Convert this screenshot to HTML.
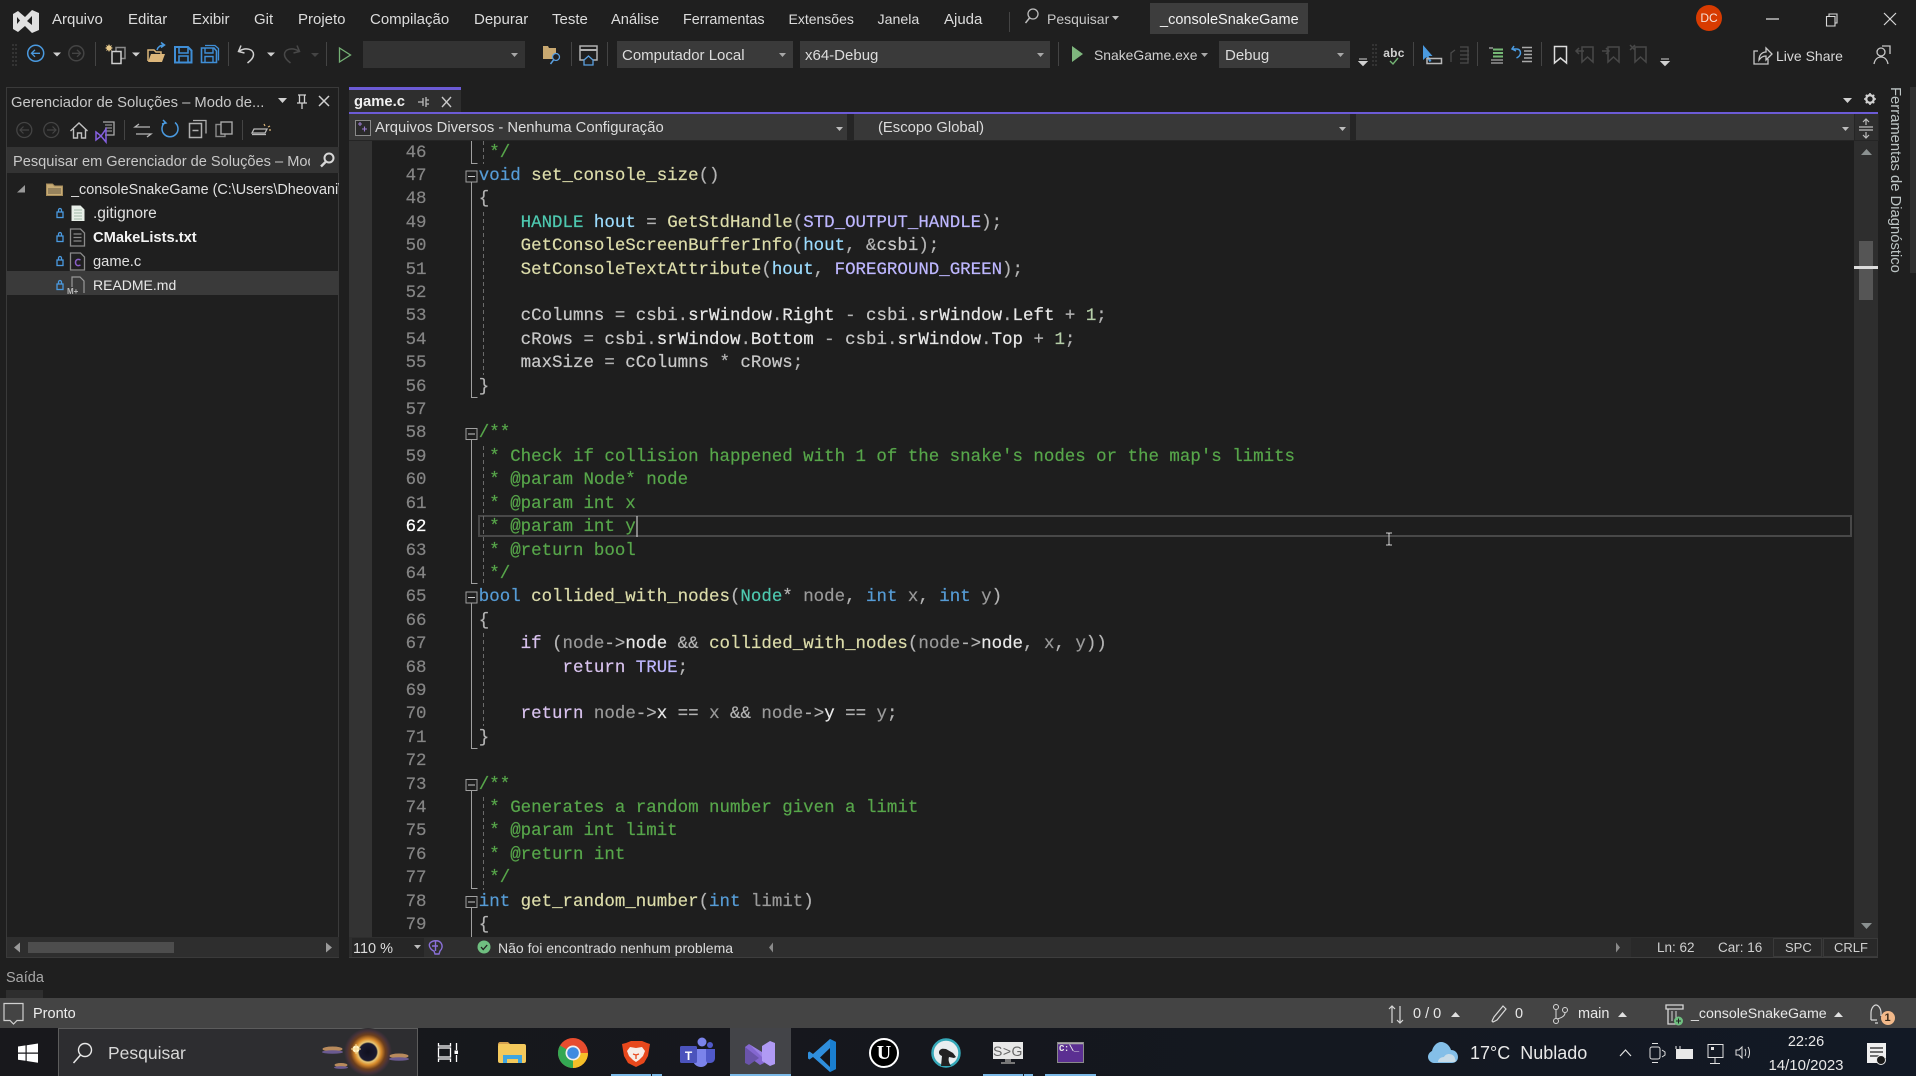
<!DOCTYPE html>
<html lang="pt-BR">
<head>
<meta charset="utf-8">
<title>game.c - _consoleSnakeGame</title>
<style>
html,body{margin:0;padding:0;width:1916px;height:1076px;overflow:hidden;background:#1f1f1f}
body{position:relative;font-family:"Liberation Sans",sans-serif;font-size:15px;color:#dcdcdc}
.t{position:absolute;white-space:nowrap;line-height:20px;height:20px}
.b{position:absolute}
pre{position:absolute;margin:0;font-family:"Liberation Mono",monospace;font-size:17.46px;line-height:23.4px;white-space:pre;-webkit-text-stroke:.2px}
#code{left:478.8px;top:141.6px;color:#c8c8c8;font-weight:400}
#nums{left:396px;top:141.6px;width:30.5px;text-align:right;color:#858585}
.k{color:#569cd6}.f{color:#dcdcaa}.y{color:#4ec9b0}.m{color:#beb7ff}.v{color:#9cdcfe}.p{color:#9a9a9a}.c{color:#57a64a}.e{color:#d8c2ee}.w{color:#e8e8e8}.o{color:#b4b4b4}
svg{position:absolute;left:0;top:0}
</style>
</head>
<body>
<!-- backgrounds -->
<div class="b" style="left:1150px;top:3px;width:158px;height:31px;background:#3d3d3d"></div>
<div class="b" style="left:363px;top:41px;width:162px;height:27px;background:#333"></div>
<div class="b" style="left:617px;top:41px;width:176px;height:27px;background:#3a3a3a"></div>
<div class="b" style="left:800px;top:41px;width:250px;height:27px;background:#3a3a3a"></div>
<div class="b" style="left:1219px;top:41px;width:131px;height:27px;background:#3a3a3a"></div>

<!-- solution explorer -->
<div class="b" style="left:6px;top:87px;width:333px;height:871px;border:1px solid #3a3a3a;box-sizing:border-box;background:#1f1f1f"></div>
<div class="b" style="left:7px;top:147px;width:332px;height:26px;background:#333"></div>
<div class="b" style="left:7px;top:271px;width:332px;height:24px;background:#3a3a3a"></div>
<div class="b" style="left:7px;top:937px;width:332px;height:20px;background:#2e2e2e"></div>
<div class="b" style="left:28px;top:942px;width:146px;height:11px;background:#4d4d4d"></div>

<!-- editor -->
<div class="b" style="left:349px;top:87px;width:112px;height:25px;background:#2e2e2e;border-top:3px solid #6c5bd6;box-sizing:border-box"></div>
<div class="b" style="left:349px;top:112px;width:1529px;height:2px;background:#6c5bd6"></div>
<div class="b" style="left:349px;top:114px;width:1530px;height:27px;background:#252525"></div>
<div class="b" style="left:349px;top:114px;width:498px;height:26px;background:#383838"></div>
<div class="b" style="left:854px;top:114px;width:496px;height:26px;background:#383838"></div>
<div class="b" style="left:1356px;top:114px;width:498px;height:26px;background:#383838"></div>
<div class="b" style="left:1855px;top:114px;width:23px;height:26px;background:#2e2e2e"></div>
<div class="b" style="left:349px;top:141px;width:23px;height:796px;background:#333"></div>
<div class="b" style="left:372px;top:141px;width:1482px;height:796px;background:#1e1e1e"></div>
<div class="b" style="left:1854px;top:141px;width:24px;height:796px;background:#2e2e2e"></div>
<div class="b" style="left:1859px;top:241px;width:14px;height:59px;background:#555"></div>
<div class="b" style="left:1854px;top:266px;width:24px;height:3px;background:#dcdcdc"></div>
<div class="b" style="left:478px;top:515px;width:1374px;height:22px;border:2px solid #484848;box-sizing:border-box"></div>
<div class="b" style="left:1910px;top:87px;width:6px;height:186px;background:#303030"></div>

<pre id="nums">46
47
48
49
50
51
52
53
54
55
56
57
58
59
60
61
<span style="color:#fff">62</span>
63
64
65
66
67
68
69
70
71
72
73
74
75
76
77
78
79</pre>
<pre id="code"><span class="c"> */</span>
<span class="k">void</span> <span class="f">set_console_size</span><span class="o">()</span>
<span class="o">{</span>
    <span class="y">HANDLE</span> <span class="v">hout</span> <span class="o">=</span> <span class="f">GetStdHandle</span><span class="o">(</span><span class="m">STD_OUTPUT_HANDLE</span><span class="o">);</span>
    <span class="f">GetConsoleScreenBufferInfo</span><span class="o">(</span><span class="v">hout</span><span class="o">, &amp;</span>csbi<span class="o">);</span>
    <span class="f">SetConsoleTextAttribute</span><span class="o">(</span><span class="v">hout</span><span class="o">,</span> <span class="m">FOREGROUND_GREEN</span><span class="o">);</span>

    cColumns <span class="o">=</span> csbi<span class="o">.</span><span class="w">srWindow</span><span class="o">.</span><span class="w">Right</span> <span class="o">-</span> csbi<span class="o">.</span><span class="w">srWindow</span><span class="o">.</span><span class="w">Left</span> <span class="o">+</span> <span style="color:#b5cea8">1</span><span class="o">;</span>
    cRows <span class="o">=</span> csbi<span class="o">.</span><span class="w">srWindow</span><span class="o">.</span><span class="w">Bottom</span> <span class="o">-</span> csbi<span class="o">.</span><span class="w">srWindow</span><span class="o">.</span><span class="w">Top</span> <span class="o">+</span> <span style="color:#b5cea8">1</span><span class="o">;</span>
    maxSize <span class="o">=</span> cColumns <span class="o">*</span> cRows<span class="o">;</span>
<span class="o">}</span>

<span class="c">/**</span>
<span class="c"> * Check if collision happened with 1 of the snake's nodes or the map's limits</span>
<span class="c"> * @param Node* node</span>
<span class="c"> * @param int x</span>
<span class="c"> * @param int y</span>
<span class="c"> * @return bool</span>
<span class="c"> */</span>
<span class="k">bool</span> <span class="f">collided_with_nodes</span><span class="o">(</span><span class="y">Node</span><span class="o">*</span> <span class="p">node</span><span class="o">,</span> <span class="k">int</span> <span class="p">x</span><span class="o">,</span> <span class="k">int</span> <span class="p">y</span><span class="o">)</span>
<span class="o">{</span>
    <span class="e">if</span> <span class="o">(</span><span class="p">node</span><span class="o">-&gt;</span><span class="w">node</span> <span class="o">&amp;&amp;</span> <span class="f">collided_with_nodes</span><span class="o">(</span><span class="p">node</span><span class="o">-&gt;</span><span class="w">node</span><span class="o">,</span> <span class="p">x</span><span class="o">,</span> <span class="p">y</span><span class="o">))</span>
        <span class="e">return</span> <span class="m">TRUE</span><span class="o">;</span>

    <span class="e">return</span> <span class="p">node</span><span class="o">-&gt;</span><span class="w">x</span> <span class="o">==</span> <span class="p">x</span> <span class="o">&amp;&amp;</span> <span class="p">node</span><span class="o">-&gt;</span><span class="w">y</span> <span class="o">==</span> <span class="p">y</span><span class="o">;</span>
<span class="o">}</span>

<span class="c">/**</span>
<span class="c"> * Generates a random number given a limit</span>
<span class="c"> * @param int limit</span>
<span class="c"> * @return int</span>
<span class="c"> */</span>
<span class="k">int</span> <span class="f">get_random_number</span><span class="o">(</span><span class="k">int</span> <span class="p">limit</span><span class="o">)</span>
<span class="o">{</span></pre>

<!-- bottom bars -->
<div class="b" style="left:349px;top:937px;width:1529px;height:21px;background:#2e2e2e;border-bottom:1px solid #3d3d3d;box-sizing:border-box"></div>
<div class="b" style="left:352px;top:938px;width:72px;height:19px;background:#262626"></div>
<div class="b" style="left:1631px;top:938px;width:142px;height:19px;background:#292929"></div>
<div class="b" style="left:1773px;top:938px;width:49px;height:19px;background:#292929;border:1px solid #3a3a3a;box-sizing:border-box"></div>
<div class="b" style="left:1823px;top:938px;width:55px;height:19px;background:#292929;border:1px solid #3a3a3a;box-sizing:border-box"></div>
<div class="b" style="left:6px;top:990px;width:37px;height:8px;background:#2e2e2e"></div>

<!-- status bar + taskbar -->
<div class="b" style="left:0;top:998px;width:1916px;height:30px;background:#444"></div>
<div class="b" style="left:0;top:1028px;width:1916px;height:48px;background:linear-gradient(90deg,#18181c,#15171d 50%,#121925)"></div>
<div class="b" style="left:58px;top:1028px;width:360px;height:48px;background:#2d2d30;border:1px solid #5c5c5c;border-bottom:0;box-sizing:border-box"></div>
<div class="b" style="left:730px;top:1028px;width:61px;height:48px;background:#434448"></div>
<div class="b" style="left:611px;top:1074px;width:40px;height:2px;background:#7ab8e6"></div>
<div class="b" style="left:652px;top:1074px;width:10px;height:2px;background:#7ab8e6"></div>
<div class="b" style="left:730px;top:1074px;width:61px;height:2px;background:#7ab8e6"></div>
<div class="b" style="left:983px;top:1074px;width:40px;height:2px;background:#7ab8e6"></div>
<div class="b" style="left:1024px;top:1074px;width:9px;height:2px;background:#7ab8e6"></div>
<div class="b" style="left:1045px;top:1074px;width:51px;height:2px;background:#7ab8e6"></div>

<!-- icons -->
<svg width="1916" height="1076" viewBox="0 0 1916 1076" fill="none">
<defs>
<radialGradient id="ecl" gradientUnits="userSpaceOnUse" cx="368" cy="1052" r="24">
<stop offset="0" stop-color="#10101e"/>
<stop offset=".36" stop-color="#1a1a30"/>
<stop offset=".42" stop-color="#e8c878"/>
<stop offset=".55" stop-color="#d88a2a"/>
<stop offset=".72" stop-color="#6e3f1c"/>
<stop offset=".88" stop-color="#46323a"/>
<stop offset="1" stop-color="#2d2d30"/>
</radialGradient>
</defs>
<!-- VS logo -->
<path d="M13 14l5-3 7 6 7-7 7 3v17l-7 3-7-7-7 6-5-3zM17 17v7l3-3.500zM32 16l-5 5 5 4z" fill="#e0e0e0" fill-rule="evenodd"/>
<!-- separators -->
<g stroke="#444" stroke-width="1">
<path d="M95.500 42v24M228.500 42v24M326.500 42v24M571.500 42v24M607.500 42v24M1058.500 42v24M1413.500 42v24M1477.500 42v24M1541.500 42v24M1009.500 12v20M124.500 120v20M242.500 120v20"/>
</g>
<!-- grippers -->
<path d="M13 44v22M16 44v22" stroke="#4a4a4a" stroke-dasharray="2 2"/>
<path d="M1373 44v22M1376 44v22" stroke="#4a4a4a" stroke-dasharray="2 2"/>
<!-- back/fwd -->
<circle cx="35.700" cy="53.300" r="8" stroke="#4a9ae0" stroke-width="1.500"/>
<path d="M40 53.300h-8M35 49.800l-3.500 3.500 3.500 3.500" stroke="#4a9ae0" stroke-width="1.300"/>
<circle cx="76.300" cy="53.300" r="7.500" stroke="#444" stroke-width="1.500"/>
<path d="M72 53.300h8M77 49.800l3.500 3.500-3.500 3.500" stroke="#444" stroke-width="1.300"/>
<g fill="#d0d0d0">
<path d="M53 52.500h8l-4 4zM132 52.500h8l-4 4zM267 52.500h8l-4 4z"/>
<path d="M311 53h8l-4 4z" fill="#444"/>
</g>
<!-- new project -->
<rect x="116" y="47.500" width="9" height="11" fill="#1f1f1f" stroke="#8a8a8a" stroke-width="1.500"/>
<rect x="112" y="51.500" width="9" height="12" fill="#1f1f1f" stroke="#cfcfcf" stroke-width="1.500"/>
<path d="M109 44l1 2 2-1-1 2 2 1-2 1 1 2-2-1-1 2-1-2-2 1 1-2-2-1 2-1-1-2 2 1z" fill="#e6c88a"/>
<!-- open -->
<path d="M148 61V50h6l2 2h5v2" stroke="#dcb67a" stroke-width="1.500"/>
<path d="M148 62l3-8h14l-3 8z" fill="#dcb67a"/>
<path d="M157 50c1-3 3-5 7-5M161 42.500l3.500 2.500-3.500 2.500" stroke="#4a9ae0" stroke-width="1.500"/>
<!-- save -->
<path d="M175 47h13l3.500 3.500V62.500H175z" stroke="#3f8ed6" stroke-width="2"/>
<path d="M179 47v6h9v-6M179 62.500V56h9v6.500" stroke="#3f8ed6" stroke-width="1.600"/>
<path d="M205 45.500h10l3.500 3v12" stroke="#3f8ed6" stroke-width="1.300"/>
<path d="M201.500 48h12.500l2.500 3v11.500H201.500z" fill="#1f1f1f" stroke="#3f8ed6" stroke-width="1.600"/>
<path d="M205 48v5h8v-5M205 62.500V56.500h8v6" stroke="#3f8ed6" stroke-width="1.400"/>
<!-- undo redo -->
<path d="M241 45.500l-2.500 6 6 1.500M239.500 51c6-4 14-2 14 3.500 0 3.500-3 6-6 8.500" stroke="#d0d0d0" stroke-width="1.500"/>
<path d="M297 45.500l2.500 6-6 1.500M298.500 51c-6-4-14-2-14 3.500 0 3.500 3 6 6 8.500" stroke="#484848" stroke-width="1.500"/>
<path d="M339.500 48v14l11-7z" stroke="#75b175" stroke-width="1.300"/>
<!-- folder find / window-home -->
<path d="M543 46h5l1 2h7v7h-13zM543 55h13v4h-13z" fill="#c8a870"/>
<circle cx="556" cy="57" r="3.500" fill="#1f1f1f" stroke="#5aa0e0" stroke-width="1.300"/>
<path d="M553.500 60l-3 4" stroke="#5aa0e0" stroke-width="1.500"/>
<rect x="580" y="46" width="17" height="14" stroke="#b0b0b0" stroke-width="1.500"/>
<path d="M580 50h17" stroke="#b0b0b0" stroke-width="2"/>
<path d="M584 60l4.500-4 4.500 4v5h-9z" fill="#1f1f1f" stroke="#5aa0e0" stroke-width="1.300"/>
<!-- drop arrows -->
<g fill="#a8a8a8">
<path d="M511 53h7l-3.500 4zM779 53h7l-3.500 4zM1037 53h7l-3.500 4zM1337 53h7l-3.500 4zM1201 53h7l-3.500 4z"/>
<path d="M836 127h7l-3.500 4zM1339 127h7l-3.500 4zM1842 127h7l-3.500 4z" fill="#bdbdbd"/>
<path d="M1843 98h9l-4.500 5zM278 98h9l-4.500 5z" fill="#d0d0d0"/>
<path d="M1112 16h7l-3.500 4z" fill="#bdbdbd"/>
</g>
<!-- play -->
<path d="M1072 46v16l11-8z" fill="#7fb77e"/>
<!-- search title -->
<circle cx="1033" cy="14" r="5" stroke="#bdbdbd" stroke-width="1.300"/>
<path d="M1029.500 18l-4 5" stroke="#bdbdbd" stroke-width="1.500"/>
<!-- right toolbar -->
<path d="M1359 59h8M1359 61.500h8l-4 4z" stroke="#d0d0d0" fill="#d0d0d0" stroke-width="1"/>
<path d="M1661 59h8M1661 61.500h8l-4 4z" stroke="#d0d0d0" fill="#d0d0d0" stroke-width="1"/>
<path d="M1390 61l3 3 5-6" stroke="#74b474" stroke-width="1.400"/>
<path d="M1423 45v15l3.500-3 3 5 2-1-3-5h4z" fill="#4a9ae0"/>
<rect x="1427" y="58.500" width="14.500" height="5" stroke="#b8b8b8" stroke-width="1.500"/>
<path d="M1451 62v-9l4-3M1460 47h8v16h-8M1460 51h9M1460 55h9M1460 59h9" stroke="#4a4a4a" stroke-width="1.300"/>
<path d="M1489 48h4" stroke="#aaa" stroke-width="1.300"/>
<path d="M1493 49.500h10M1493 53h10M1493 56.500h10" stroke="#76b876" stroke-width="2"/>
<path d="M1491 60h12M1491 63h12" stroke="#aaa" stroke-width="1.300"/>
<path d="M1514 46l-2 3 4 2M1512.500 49h4c3 0 4 2 4 4s-2 4-4 5" stroke="#4a9ae0" stroke-width="1.500"/>
<path d="M1522 47.500h10M1524 51h8M1524 54.500h8M1524 58h8M1522 61.500h10" stroke="#aaa" stroke-width="1.400"/>
<path d="M1554.500 46.500h12V63l-6-5-6 5z" stroke="#dcdcdc" stroke-width="1.500"/>
<g stroke="#484848" stroke-width="1.500">
<path d="M1582 47h11V62l-5.500-5-5.500 5zM1584 51h-7M1579 48l-3 3 3 3"/>
<path d="M1608 47h11V62l-5.500-5-5.500 5zM1609 51h-7M1606 48l3 3-3 3"/>
<path d="M1635 47h11V62l-5.500-5-5.500 5zM1630 45l5 5M1635 45l-5 5"/>
</g>
<!-- live share -->
<path d="M1758 51h-4v13h14v-5" stroke="#c8c8c8" stroke-width="1.300"/>
<path d="M1759 60c0-5 3-8 7-8v-4l6 6-6 6v-4c-3 0-5 1-7 4z" stroke="#c8c8c8" stroke-width="1.300"/>
<circle cx="1881" cy="52" r="4" stroke="#c8c8c8" stroke-width="1.300"/>
<path d="M1874 64c1-5 4-7 7-7s6 2 7 7M1882 46h8v8" stroke="#c8c8c8" stroke-width="1.300"/>
<!-- window controls -->
<path d="M1766 19h13" stroke="#d8d8d8" stroke-width="1.300"/>
<path d="M1826.500 16.500h8.500v9.500h-8.500zM1829 16.500V14h8v9h-2" stroke="#d8d8d8" stroke-width="1.100"/>
<path d="M1884 13l12 12M1896 13l-12 12" stroke="#d8d8d8" stroke-width="1.200"/>
<!-- panel title -->
<path d="M298 95h8M299.500 95v8h5v-8M297 103h10M302 103v6" stroke="#d0d0d0" stroke-width="1.300"/>
<path d="M319 96l10 10M329 96l-10 10" stroke="#d0d0d0" stroke-width="1.500"/>
<!-- panel toolbar -->
<circle cx="24.300" cy="130" r="7.500" stroke="#444" stroke-width="1.300"/>
<path d="M29 130h-9M23.500 126.500l-3.500 3.500 3.500 3.500" stroke="#444" stroke-width="1.200"/>
<circle cx="51.300" cy="130" r="7.500" stroke="#444" stroke-width="1.300"/>
<path d="M47 130h9M52.500 126.500l3.500 3.500-3.500 3.500" stroke="#444" stroke-width="1.200"/>
<path d="M70.500 131l8.500-8 8.500 8M73.500 129v9h4v-5h4v5h4v-9" stroke="#c0c0c0" stroke-width="1.400"/>
<path d="M103 122h11v13h-9" stroke="#aaa" stroke-width="1.300"/>
<path d="M105 125h7M105 128h7M105 131h7" stroke="#aaa" stroke-width="1"/>
<path d="M96 132l5 4 5-7v13l-5-6-5 4z" stroke="#8560e0" stroke-width="1.500"/>
<path d="M135 127h15M139 124l-4 3 4 0M136 134h15M147 137l4-3-4 0" stroke="#b8b8b8" stroke-width="1.300"/>
<path d="M165 122.500a8 8 0 1 0 10 0M163 120l3 3-4 1" stroke="#4a9ae0" stroke-width="1.500"/>
<rect x="189.500" y="123.500" width="12" height="14" stroke="#b0b0b0" stroke-width="1.500"/>
<path d="M193 120.500h13v13" stroke="#b0b0b0" stroke-width="1.300"/>
<path d="M192.500 130.500h6" stroke="#b0b0b0" stroke-width="1.500"/>
<rect x="216" y="124.500" width="9" height="12" stroke="#8a8a8a" stroke-width="1.400"/>
<rect x="221" y="122" width="11" height="12" fill="#1f1f1f" stroke="#a8a8a8" stroke-width="1.400"/>
<path d="M252 133h13l2-4h-13z" stroke="#b8b8b8" stroke-width="1.300"/>
<path d="M252 134.500h14" stroke="#b8b8b8" stroke-width="1.300"/>
<path d="M264 124l1 2M268 127l2-1M269 130h2" stroke="#dcb67a" stroke-width="1.200"/>
<!-- search box glass -->
<circle cx="329" cy="158" r="4.500" stroke="#d8d8d8" stroke-width="2"/>
<path d="M325.500 162l-4.500 4.500" stroke="#d8d8d8" stroke-width="2.400"/>
<!-- tree -->
<path d="M17 192.500h8V185z" fill="#999"/>
<path d="M46.500 184h6l2 2h8v9.500h-16z" fill="#c7ab75" stroke="#a88e5c"/>
<path d="M48 188h13v6H48z" fill="#3f3a30" opacity=".35"/>
<g stroke="#4a9ae0" stroke-width="1.300">
<rect x="57" y="212" width="6" height="5.500"/><path d="M58.500 212v-2a1.500 1.500 0 0 1 3 0v2"/>
<rect x="57" y="236" width="6" height="5.500"/><path d="M58.500 236v-2a1.500 1.500 0 0 1 3 0v2"/>
<rect x="57" y="260" width="6" height="5.500"/><path d="M58.500 260v-2a1.500 1.500 0 0 1 3 0v2"/>
<rect x="57" y="284" width="6" height="5.500"/><path d="M58.500 284v-2a1.500 1.500 0 0 1 3 0v2"/>
</g>
<path d="M71.500 205.500h9l4 4v11.500h-13z" fill="#e8efe8"/>
<path d="M74 210h8M74 213h8M74 216h8M74 219h8" stroke="#a0b8a8"/>
<path d="M70.500 229h10l4 4v13h-14z" stroke="#8a8a8a" stroke-width="1.300"/>
<path d="M73.500 234h8M73.500 237.500h8M73.500 241h8" stroke="#8a8a8a" stroke-width="1.200"/>
<path d="M70.500 253h10l4 4v13h-14z" stroke="#8a8a8a" stroke-width="1.300"/>
<path d="M80.500 260c-3-1.500-5 0-5 2.500s2 4 5 2.500" stroke="#8a60c8" stroke-width="1.500"/>
<path d="M72 287v-10h8l4 4v12" stroke="#999" stroke-width="1.200"/>
<!-- outlining -->
<g stroke="#a0a0a0" stroke-width="1">
<path d="M471.500 141v22.500h6"/>
<path d="M471.500 182v215.500h6"/>
<path d="M471.500 440v143.500h6"/>
<path d="M471.500 603v145.500h6"/>
<path d="M471.500 791v97.500h6"/>
<path d="M471.500 908v29"/>
</g>
<g fill="#1e1e1e" stroke="#a0a0a0" stroke-width="1">
<rect x="466" y="171" width="11" height="11"/>
<rect x="466" y="428.500" width="11" height="11"/>
<rect x="466" y="592" width="11" height="11"/>
<rect x="466" y="779.500" width="11" height="11"/>
<rect x="466" y="896.500" width="11" height="11"/>
</g>
<path d="M468 176.500h7M468 434h7M468 597.500h7M468 785h7M468 902h7" stroke="#c8c8c8" stroke-width="1"/>
<path d="M483.500 141v23M483.500 212v163M483.500 446v140M483.500 633v93M483.500 797v93" stroke="#6a6a6a" stroke-width="1" stroke-dasharray="4 3"/>
<!-- caret & ibeam -->
<path d="M637 516v21" stroke="#e8e8e8" stroke-width="1"/>
<path d="M1386 533h2.500l.5 1 .5-1h2.500M1389 534v10M1386 545h2.500l.5-1 .5 1h2.500" stroke="#d0d0d0" stroke-width="1"/>
<!-- nav icon -->
<rect x="355.500" y="120.500" width="15" height="15" fill="#2a2a2a" stroke="#8a8a8a"/>
<path d="M358 124h4M360 122v4M362 129h5M364.500 126.500v5" stroke="#9a7bd0" stroke-width="1.100"/>
<!-- tab pin, close -->
<path d="M418 102h5M423 98v8M426 97v10M426 100h3M426 104h3" stroke="#bbb" stroke-width="1.300"/>
<path d="M442 97l9 10M451 97l-9 10" stroke="#c8c8c8" stroke-width="1.400"/>
<!-- gear -->
<circle cx="1870" cy="99" r="3.800" stroke="#d0d0d0" stroke-width="2.300"/>
<path d="M1870 93v12M1864 99h12M1865.800 94.800l8.400 8.400M1874.200 94.800l-8.400 8.400" stroke="#d0d0d0" stroke-width="1.600" stroke-dasharray="2 8"/>
<!-- splitter -->
<path d="M1859 127h14M1859 130h14M1866 119v6M1866 132v6M1863 122l3-3 3 3M1863 135l3 3 3-3" stroke="#bdbdbd" stroke-width="1.200"/>
<!-- scroll arrows -->
<path d="M1861 155l5.500-6 5.500 6z" fill="#8a9090"/>
<path d="M1861 923l5.500 6 5.500-6z" fill="#8a9090"/>
<path d="M14 947.500l6-5v10z" fill="#9a9a9a"/>
<path d="M332 947.500l-6-5v10z" fill="#9a9a9a"/>
<path d="M773 942.500l-4 5 4 5z" fill="#8a8a8a"/>
<path d="M1616 942.500l4 5-4 5z" fill="#8a8a8a"/>
<path d="M414 945h7l-3.500 4z" fill="#bdbdbd"/>
<!-- brain / status check -->
<path d="M430 943c3-3 9-3 11 0 2 3 1 6-1 8l-1 3h-4l-1-3c-3-1-6-5-4-8zM435.500 941v10M432 946h6" stroke="#8a70d8" stroke-width="1.400"/>
<circle cx="484" cy="947" r="6.500" fill="#6fbf80"/>
<path d="M481 947l2.200 2.500 4-4.500" stroke="#1f1f1f" stroke-width="1.300"/>
<!-- status bar icons -->
<path d="M4 1003.500h19v17h-6l-3.500 3.500-3.500-3.500H4z" stroke="#d0d0d0" stroke-width="1.200"/>
<path d="M1392 1006v17M1389 1009l3-3 3 3M1400 1023v-17M1397 1020l3 3 3-3" stroke="#d8d8d8" stroke-width="1.200"/>
<path d="M1451 1017h9l-4.500-5z" fill="#e0e0e0"/>
<path d="M1492 1021l2 -4 9-11 3 3-9 11-4 2z" stroke="#d8d8d8" stroke-width="1.200"/>
<circle cx="1556" cy="1007" r="2.500" stroke="#d8d8d8"/><circle cx="1556" cy="1021" r="2.500" stroke="#d8d8d8"/><circle cx="1565" cy="1010" r="2.500" stroke="#d8d8d8"/>
<path d="M1556 1010v8M1565 1013c0 3-4 5-8 6" stroke="#d8d8d8"/>
<path d="M1618 1017h9l-4.500-5z" fill="#e0e0e0"/>
<path d="M1666 1005h17v4h-17zM1668 1009v15h10" stroke="#d8d8d8" stroke-width="1.300"/>
<path d="M1672 1011v10M1676 1011v7" stroke="#d8d8d8"/>
<circle cx="1678.500" cy="1021" r="4.500" fill="#6fbf80"/>
<path d="M1676 1021h5M1678.500 1018.500v5" stroke="#222"/>
<path d="M1834 1017h9l-4.500-5z" fill="#e0e0e0"/>
<path d="M1871 1020v-7c0-5 3-8 5-8s5 3 5 8v3M1871 1020h6M1875 1023h3" stroke="#d8d8d8" stroke-width="1.200"/>
<circle cx="1888" cy="1018" r="7" fill="#f2b98a"/>
<!-- taskbar: windows -->
<path d="M18 1046.500l7.500-1.100v7.100H18zM26.700 1045.200l11.300-1.700v9H26.700zM18 1053.700h7.500v7.100L18 1059.700zM26.700 1053.700H38v9l-11.300-1.700z" fill="#fff"/>
<circle cx="85" cy="1050" r="6.500" stroke="#e8e8e8" stroke-width="1.400"/>
<path d="M80.500 1055l-7 8" stroke="#e8e8e8" stroke-width="1.500"/>
<!-- eclipse -->
<circle cx="368" cy="1052" r="24" fill="url(#ecl)"/>
<circle cx="356" cy="1049" r="3.500" fill="#fff5c8"/>
<path d="M351 1049h10M356 1044v10" stroke="#f8d890" stroke-width="1"/>
<ellipse cx="332.500" cy="1049" rx="10" ry="2.500" fill="#b88a5c"/>
<ellipse cx="332.500" cy="1052" rx="10.500" ry="1.800" fill="#6a5a90"/>
<ellipse cx="399" cy="1056" rx="9.500" ry="2.500" fill="#b88a5c"/>
<ellipse cx="399" cy="1059" rx="10" ry="1.800" fill="#6a5a90"/>
<ellipse cx="341" cy="1065" rx="6.500" ry="2" fill="#b88a5c"/>
<ellipse cx="341" cy="1067.500" rx="7" ry="1.400" fill="#6a5a90"/>
<!-- task view -->
<path d="M438.500 1043v3h12v-3M438.500 1062v-3h12v3M438.500 1048h12v9h-12zM456.500 1043v7M456.500 1055v7" stroke="#fff" stroke-width="1.300"/>
<rect x="454.500" y="1050.500" width="3.500" height="3.500" fill="#fff"/>
<!-- explorer -->
<path d="M498 1044c0-1 1-2 2-2h8l3 3h-13z" fill="#d39f4f"/>
<rect x="498" y="1044" width="28" height="19" rx="2" fill="#f4c95c"/>
<path d="M503 1063v-8h19v8h-4v-4h-11v4z" fill="#3fa5e0"/>
<!-- chrome -->
<circle cx="573" cy="1053" r="15" fill="#e84c2e"/>
<path d="M573 1053l-13-7.500a15 15 0 0 0 13 22.500z" fill="#34a853"/>
<path d="M573 1053h15a15 15 0 0 1 -15 15z" fill="#f5bf28"/>
<circle cx="573" cy="1053" r="7.500" fill="#f0f0f0"/>
<circle cx="573" cy="1053" r="5.800" fill="#3f8be0"/>
<!-- brave -->
<path d="M626 1043l5-2h11l5 2 3 1-2 12-4 7-8 4-8-4-4-7-2-12z" fill="#e8481c"/>
<path d="M630 1047l6 1 6-1 3 4-2 5-4 4-3 2-3-2-4-4-2-5z" fill="#f6ece6"/>
<path d="M633 1054l3 1 3-1M636 1055v4" stroke="#e8481c" stroke-width="1.300"/>
<!-- teams -->
<circle cx="702" cy="1042" r="4.500" fill="#7b83eb"/>
<circle cx="710" cy="1045" r="3" fill="#5059c9"/>
<path d="M693 1049h15v11c0 4-3 7-7 7s-8-3-8-7z" fill="#7b83eb"/>
<path d="M706 1049h9v9c0 3-2 5-5 5s-4-1-4-3z" fill="#5059c9"/>
<rect x="680" y="1046" width="17" height="17" rx="1.500" fill="#4b53bc"/>
<!-- VS -->
<path d="M745 1047l4-3 17 16-2 3v0l-4 2-15-11z" fill="#8467d0"/>
<path d="M745 1047l14 11-10 7-4-2z" fill="#6a54aa"/>
<path d="M762 1046l8-5 5 2v21l-5 2-8-5z" fill="#b09af4"/>
<path d="M749 1044l13 8v5z" fill="#9a80e4"/>
<!-- vscode -->
<path d="M830 1039l-17 15-3.500-2.500-1.500 1v6l1.500 1 3.500-2.500 17 15 6-3v-27z" fill="#2f8fdd"/>
<path d="M830 1048v19l-10-9.500z" fill="#15171d"/>
<path d="M830 1039l6 3v27l-6 3z" fill="#1a7fd0"/>
<!-- unreal -->
<circle cx="884" cy="1053" r="14" fill="#000" stroke="#fff" stroke-width="2"/>
<!-- wolf circle -->
<circle cx="946" cy="1053" r="13.500" fill="#e8eef0" stroke="#35a8b8" stroke-width="2.500"/>
<path d="M941 1066l1-10c-3-1-4-4-2-6 2-2 4-1 6-1l7 4 3 4-2 1-5-1c-1 3 0 6 2 9z" fill="#222"/>
<!-- S>G -->
<rect x="993" y="1042" width="30" height="17" fill="#e8e8e8"/>
<path d="M1005 1059h6v3h4v2h-14v-2h4z" fill="#777"/>
<!-- console -->
<rect x="1057.500" y="1042.500" width="26" height="20" fill="#5b2f92" stroke="#8a8a8a"/>
<path d="M1058 1043.500h25" stroke="#aaa" stroke-width="1.500"/>
<!-- weather -->
<path d="M1434 1063c-3 0-6-3-6-6s2-5 4-6c1-5 5-9 9-9 5 0 9 4 10 8 4 0 7 3 7 7s-3 6-6 6z" fill="#84bfe8"/>
<path d="M1438 1062c0-3 3-5 6-5 1-2 3-3 5-3 3 0 6 2 6 5 1 1 1 2 0 3z" fill="#c8dce8"/>
<!-- tray -->
<path d="M1620 1056l5.500-6 5.500 6" stroke="#e0e0e0" stroke-width="1.200"/>
<rect x="1650" y="1047" width="10" height="12" rx="2" stroke="#e0e0e0"/>
<path d="M1652 1043.500h6M1652 1062.500h6M1662 1050l3 2v3l-3 2" stroke="#e0e0e0"/>
<rect x="1676" y="1049" width="17" height="10" fill="#e8e8e8"/>
<path d="M1676 1046v3M1680 1046v3" stroke="#e8e8e8"/>
<rect x="1708" y="1044.500" width="15" height="13" stroke="#e0e0e0"/>
<path d="M1715 1057.500v6M1710 1063.500h10" stroke="#e0e0e0"/>
<rect x="1711" y="1047" width="3" height="3" fill="#e0e0e0"/>
<path d="M1736 1050h3l3-3v11l-3-3h-3zM1745 1049c1 2 1 5 0 7M1748 1047c2 3 2 8 0 11" stroke="#e0e0e0"/>
<!-- notification -->
<path d="M1867 1043h19v15l-6 5h-13z" fill="#f0f0f0"/>
<path d="M1870 1048h13M1870 1052h13M1870 1056h9" stroke="#222" stroke-width="1.200"/>
<circle cx="1881" cy="1060" r="4.500" fill="#1a1a1a" stroke="#e8e8e8"/>
</svg>

<!-- text: title bar -->
<div class="t" style="left:52px;top:10px">Arquivo</div>
<div class="t" style="left:128px;top:10px">Editar</div>
<div class="t" style="left:192px;top:10px">Exibir</div>
<div class="t" style="left:254px;top:10px">Git</div>
<div class="t" style="left:298px;top:10px">Projeto</div>
<div class="t" style="left:370px;top:10px">Compilação</div>
<div class="t" style="left:474px;top:10px">Depurar</div>
<div class="t" style="left:552px;top:10px">Teste</div>
<div class="t" style="left:611px;top:10px;font-size:14.700px">Análise</div>
<div class="t" style="left:683px;top:10px;font-size:14.400px">Ferramentas</div>
<div class="t" style="left:788.500px;top:9px;font-size:14px">Extensões</div>
<div class="t" style="left:877.500px;top:10px;font-size:14.200px">Janela</div>
<div class="t" style="left:944px;top:10px">Ajuda</div>
<div class="t" style="left:1047px;top:9px;font-size:14px;color:#c8c8c8">Pesquisar</div>
<div class="t" style="left:1160px;top:10px;color:#f0f0f0;font-size:14.500px">_consoleSnakeGame</div>
<div class="b" style="left:1696px;top:5px;width:26px;height:26px;border-radius:50%;background:#d83b01"></div>
<div class="t" style="left:1696px;top:8px;width:26px;text-align:center;font-size:12px;color:#f4e0d8">DC</div>

<!-- text: toolbar -->
<div class="t" style="left:622px;top:46px">Computador Local</div>
<div class="t" style="left:805px;top:46px">x64-Debug</div>
<div class="t" style="left:1094px;top:45px;color:#d0d0d0;font-size:13.900px">SnakeGame.exe</div>
<div class="t" style="left:1225px;top:46px">Debug</div>
<div class="t" style="left:1776px;top:46px;color:#d8d8d8;font-size:14px">Live Share</div>
<div class="t" style="left:1383px;top:43px;width:22px;text-align:center;font-size:12px;font-weight:bold;color:#d0d0d0;letter-spacing:.3px">abc</div>

<!-- text: solution explorer -->
<div class="t" style="left:11px;top:93px;color:#c8c8c8;font-size:14.800px">Gerenciador de Soluções – Modo de...</div>
<div class="t" style="left:13px;top:152px;width:297px;overflow:hidden;color:#c8c8c8;font-size:14.600px">Pesquisar em Gerenciador de Soluções – Modo de Exibição</div>
<div class="t" style="left:71px;top:180px;width:268px;overflow:hidden;color:#e0e0e0;font-size:14.400px">_consoleSnakeGame (C:\Users\Dheovani\source</div>
<div class="t" style="left:93px;top:204px;color:#e0e0e0;font-size:15.500px">.gitignore</div>
<div class="t" style="left:93px;top:228px;color:#f4f4f4;font-weight:bold;font-size:14.700px">CMakeLists.txt</div>
<div class="t" style="left:93px;top:252px;color:#e0e0e0;font-size:14.700px">game.c</div>
<div class="t" style="left:93px;top:275px;color:#e8e8e8;font-size:14px">README.md</div>
<div class="t" style="left:67px;top:287px;font-size:8px;font-weight:bold;color:#bbb;height:10px;line-height:10px">M+</div>

<!-- text: editor chrome -->
<div class="t" style="left:354px;top:92px;font-weight:bold;color:#f0f0f0;font-size:14.800px">game.c</div>
<div class="t" style="left:375px;top:118px;color:#dcdcdc;font-size:14.800px">Arquivos Diversos - Nenhuma Configuração</div>
<div class="t" style="left:878px;top:118px;color:#dcdcdc;font-size:14.800px">(Escopo Global)</div>
<div class="t" style="left:1885px;top:87px;height:190px;width:20px;writing-mode:vertical-rl;font-size:14.800px;line-height:20px;color:#bcc4c4">Ferramentas de Diagnóstico</div>

<!-- text: editor bottom -->
<div class="t" style="left:353px;top:939px;font-size:14.500px">110 %</div>
<div class="t" style="left:498px;top:938px;font-size:14px;color:#dcdcdc">Não foi encontrado nenhum problema</div>
<div class="t" style="left:1657px;top:938px;font-size:13.500px;color:#d0d0d0">Ln: 62</div>
<div class="t" style="left:1718px;top:938px;font-size:13.500px;color:#d0d0d0">Car: 16</div>
<div class="t" style="left:1785px;top:938px;font-size:13px;color:#d0d0d0">SPC</div>
<div class="t" style="left:1834px;top:938px;font-size:13px;color:#d0d0d0">CRLF</div>
<div class="t" style="left:6px;top:968px;font-size:14.500px;color:#a8a8a8">Saída</div>

<!-- text: status bar -->
<div class="t" style="left:33px;top:1004px;font-size:14.500px;color:#eee">Pronto</div>
<div class="t" style="left:1413px;top:1004px;font-size:14.500px;color:#e8e8e8">0 / 0</div>
<div class="t" style="left:1515px;top:1004px;font-size:14.500px;color:#e8e8e8">0</div>
<div class="t" style="left:1578px;top:1004px;font-size:14.500px;color:#e8e8e8">main</div>
<div class="t" style="left:1691px;top:1004px;font-size:14.200px;color:#e8e8e8">_consoleSnakeGame</div>
<div class="t" style="left:1884.500px;top:1010px;font-size:11px;font-weight:bold;color:#3a2a1a;height:16px;line-height:16px">1</div>

<!-- text: taskbar -->
<div class="t" style="left:108px;top:1043px;font-size:17.500px;color:#d8d8d8">Pesquisar</div>
<div class="t" style="left:680px;top:1046px;width:17px;text-align:center;font-size:12px;font-weight:bold;color:#fff">T</div>
<div class="t" style="left:874px;top:1043px;width:20px;text-align:center;font-family:'Liberation Serif',serif;font-size:20px;font-weight:bold;color:#fff">U</div>
<div class="t" style="left:993px;top:1041px;width:30px;text-align:center;font-size:14px;letter-spacing:.5px;color:#666">S&gt;G</div>
<div class="t" style="left:1059px;top:1039px;font-family:'Liberation Mono',monospace;font-size:9px;font-weight:bold;color:#e8e8e8;letter-spacing:-.5px">C:\_</div>
<div class="t" style="left:1470px;top:1043px;font-size:18px;color:#e8e8e8">17°C&nbsp; Nublado</div>
<div class="t" style="left:1766px;top:1032px;width:80px;text-align:center;font-size:14.500px;color:#e8e8e8">22:26</div>
<div class="t" style="left:1766px;top:1056px;width:80px;text-align:center;font-size:15px;color:#e8e8e8">14/10/2023</div>
</body>
</html>
